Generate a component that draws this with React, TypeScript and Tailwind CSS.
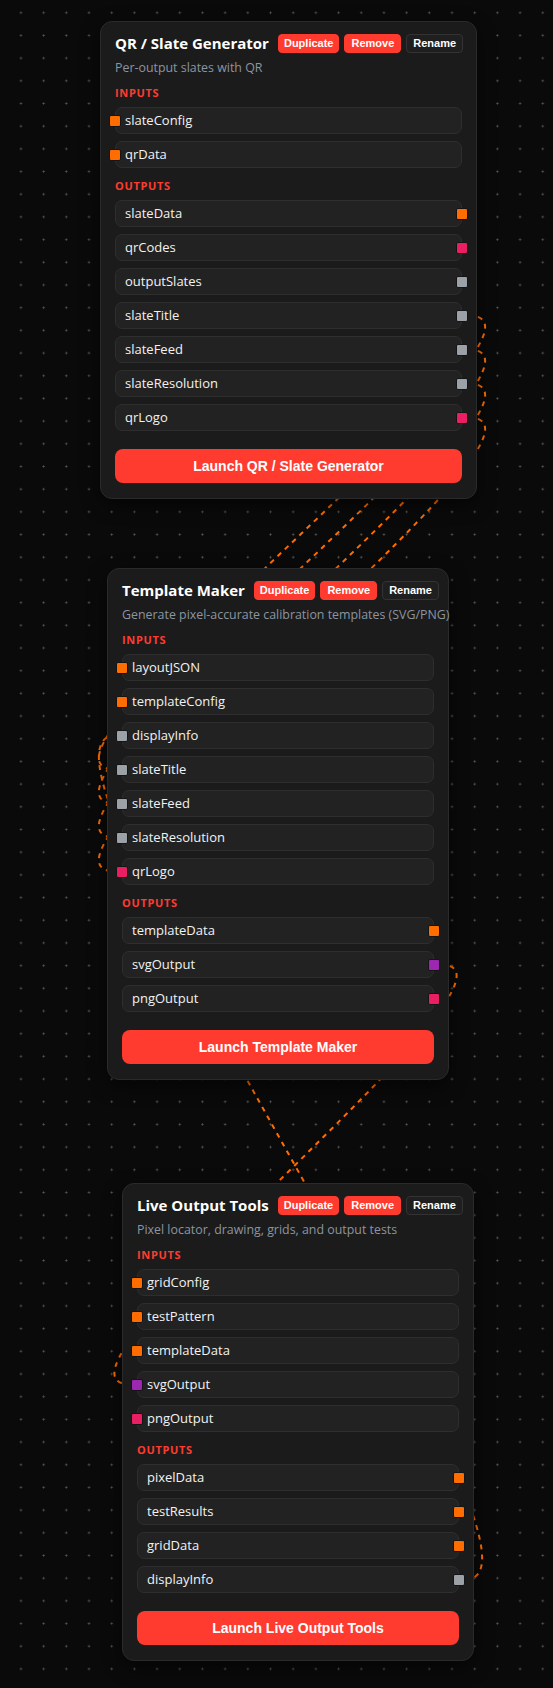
import type { ReactNode } from 'react'

type Port = { name: string; color: string }

type FlowNode = {
  id: string
  x: number
  y: number
  w: number
  title: string
  subtitle: string
  inputs: Port[]
  outputs: Port[]
}

const ORANGE = 'bg-[#ff6d00]'
const PINK = 'bg-[#e91e63]'
const GRAY = 'bg-[#9ca1a8]'
const PURPLE = 'bg-[#9c27b0]'

const nodes: FlowNode[] = [
  {
    id: 'qr',
    x: 100,
    y: 21,
    w: 377,
    title: 'QR / Slate Generator',
    subtitle: 'Per-output slates with QR',
    inputs: [
      { name: 'slateConfig', color: ORANGE },
      { name: 'qrData', color: ORANGE },
    ],
    outputs: [
      { name: 'slateData', color: ORANGE },
      { name: 'qrCodes', color: PINK },
      { name: 'outputSlates', color: GRAY },
      { name: 'slateTitle', color: GRAY },
      { name: 'slateFeed', color: GRAY },
      { name: 'slateResolution', color: GRAY },
      { name: 'qrLogo', color: PINK },
    ],
  },
  {
    id: 'template',
    x: 107,
    y: 568,
    w: 342,
    title: 'Template Maker',
    subtitle: 'Generate pixel-accurate calibration templates (SVG/PNG)',
    inputs: [
      { name: 'layoutJSON', color: ORANGE },
      { name: 'templateConfig', color: ORANGE },
      { name: 'displayInfo', color: GRAY },
      { name: 'slateTitle', color: GRAY },
      { name: 'slateFeed', color: GRAY },
      { name: 'slateResolution', color: GRAY },
      { name: 'qrLogo', color: PINK },
    ],
    outputs: [
      { name: 'templateData', color: ORANGE },
      { name: 'svgOutput', color: PURPLE },
      { name: 'pngOutput', color: PINK },
    ],
  },
  {
    id: 'live',
    x: 122,
    y: 1183,
    w: 352,
    title: 'Live Output Tools',
    subtitle: 'Pixel locator, drawing, grids, and output tests',
    inputs: [
      { name: 'gridConfig', color: ORANGE },
      { name: 'testPattern', color: ORANGE },
      { name: 'templateData', color: ORANGE },
      { name: 'svgOutput', color: PURPLE },
      { name: 'pngOutput', color: PINK },
    ],
    outputs: [
      { name: 'pixelData', color: ORANGE },
      { name: 'testResults', color: ORANGE },
      { name: 'gridData', color: ORANGE },
      { name: 'displayInfo', color: GRAY },
    ],
  },
]

// [source node, output idx, target node, input idx]
const edges: [string, number, string, number][] = [
  ['qr', 3, 'template', 3],
  ['qr', 4, 'template', 4],
  ['qr', 5, 'template', 5],
  ['qr', 6, 'template', 6],
  ['template', 1, 'live', 3],
  ['live', 3, 'template', 2],
]

// geometry of the card, kept in sync with the classes below
const FIRST_ROW = 86
const PITCH = 34
const HALF_ROW = 13.5

function inputY(n: FlowNode, i: number) {
  return n.y + FIRST_ROW + PITCH * i + HALF_ROW
}

function outputY(n: FlowNode, i: number) {
  return n.y + FIRST_ROW + 25 + PITCH * n.inputs.length + PITCH * i + HALF_ROW
}

function edgePath(sx: number, sy: number, tx: number, ty: number) {
  const dx = tx - sx
  const d = dx >= 0 ? dx * 0.5 : 6.65 * Math.sqrt(-dx)
  return `M${sx},${sy} C${sx + d},${sy} ${tx - d},${ty} ${tx},${ty}`
}

function SectionLabel({ children, className }: { children: ReactNode; className: string }) {
  return (
    <div
      className={`${className} text-[11px] leading-[15px] font-bold tracking-[0.06em] text-[#ff3b30]`}
    >
      {children}
    </div>
  )
}

function PortRow({ port, side }: { port: Port; side: 'in' | 'out' }) {
  return (
    <div className="relative flex h-[27px] items-center rounded-[7px] border border-[#2e2e2e] bg-[#222222] pl-[9px]">
      <span className="text-[13px] leading-[17px] text-[#f2f2f2]">{port.name}</span>
      <span
        className={`absolute top-1/2 h-[12px] w-[12px] -translate-y-1/2 rounded-[2px] border border-[#141414] ${port.color} ${
          side === 'in' ? 'left-[-7px]' : 'right-[-7px]'
        }`}
      />
    </div>
  )
}

function NodeCard({ node }: { node: FlowNode }) {
  return (
    <div
      className="absolute rounded-[12px] border border-[#2a2a2a] bg-[#1b1b1b] px-[14px] pt-[10px] pb-[15px] shadow-[0_6px_18px_rgba(0,0,0,0.55)]"
      style={{ left: node.x, top: node.y, width: node.w }}
    >
      <div className="flex h-[22px] items-center justify-between gap-[9px]">
        <h2 className="text-[15px] leading-[22px] font-bold whitespace-nowrap text-white">
          {node.title}
        </h2>
        <div className="flex items-center gap-[5px] font-['Liberation_Sans',Arial,sans-serif] text-[11px] font-bold text-white">
          <button className="h-[19px] rounded-[4px] border border-[#ff3b30] bg-[#ff3b30] px-[5px]">
            Duplicate
          </button>
          <button className="h-[19px] rounded-[4px] border border-[#ff3b30] bg-[#ff3b30] px-[6px]">
            Remove
          </button>
          <button className="h-[19px] rounded-[4px] border border-[#333333] bg-[#1f1f1f] px-[6px]">
            Rename
          </button>
        </div>
      </div>

      <p className="mt-[5px] text-[12.4px] leading-[18px] whitespace-nowrap text-[#8b95a1]">
        {node.subtitle}
      </p>

      <SectionLabel className="mt-[8px]">INPUTS</SectionLabel>
      <div className="mt-[7px] flex flex-col gap-[7px]">
        {node.inputs.map((p) => (
          <PortRow key={p.name} port={p} side="in" />
        ))}
      </div>

      <SectionLabel className="mt-[10px]">OUTPUTS</SectionLabel>
      <div className="mt-[7px] flex flex-col gap-[7px]">
        {node.outputs.map((p) => (
          <PortRow key={p.name} port={p} side="out" />
        ))}
      </div>

      <button className="mt-[18px] flex h-[34px] w-full items-center justify-center rounded-[8px] bg-[#ff3b30] font-['Liberation_Sans',Arial,sans-serif] text-[14px] font-bold text-white">
        Launch {node.title}
      </button>
    </div>
  )
}

export default function App() {
  const byId = Object.fromEntries(nodes.map((n) => [n.id, n]))

  return (
    <div className="relative h-[1688px] w-[553px] overflow-hidden bg-[#0a0a0a] bg-[radial-gradient(circle,#5a5a5a_0.9px,transparent_1.1px)] bg-[length:22.7px_22.7px] bg-[position:9.6px_1.4px] font-['Open_Sans','Noto_Sans',sans-serif]">
      <svg className="pointer-events-none absolute top-0 left-0" width={553} height={1688}>
        {edges.map(([s, si, t, ti]) => {
          const a = byId[s]
          const b = byId[t]
          const sx = a.x + a.w - 9
          const sy = outputY(a, si)
          const tx = b.x + 9
          const ty = inputY(b, ti)
          return (
            <path
              key={`${s}-${si}-${t}-${ti}`}
              d={edgePath(sx, sy, tx, ty)}
              fill="none"
              stroke="#ff6d00"
              strokeWidth={2}
              strokeDasharray="5 5"
            />
          )
        })}
      </svg>

      {nodes.map((n) => (
        <NodeCard key={n.id} node={n} />
      ))}
    </div>
  )
}
